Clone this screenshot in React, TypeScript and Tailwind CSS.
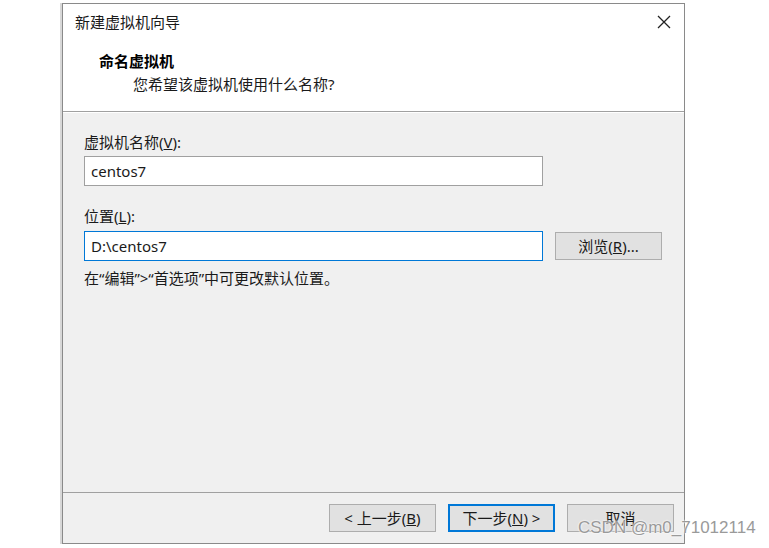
import React from "react";

const font = { fontFamily: '"Noto Sans", "Noto Sans CJK SC", sans-serif' };

function Btn({ children, primary }: { children: React.ReactNode; primary?: boolean }) {
  return (
    <div
      className={
        "w-[107px] h-[28px] flex items-center justify-center bg-[#e1e1e1] text-[15px] text-[#1a1a1a] " +
        (primary ? "border-2 border-[#0078d7]" : "border border-[#adadad]")
      }
    >
      {children}
    </div>
  );
}

export default function App() {
  return (
    <div className="w-[769px] h-[548px] bg-white relative overflow-hidden" style={font}>
      <div className="pl-[62px] pt-[3px]">
        <div className="w-[623px] h-[541px] border border-[#8a8a8a] flex flex-col bg-[#f0f0f0] shadow-[-2px_0_0_#d8d8d8]">
          {/* header */}
          <div className="h-[108px] bg-white border-b border-[#a0a0a0] flex flex-col relative">
            <div className="flex items-center justify-between pl-[12px] pr-[12px] pt-[8px] h-[28px]">
              <span className="text-[15px] leading-[20px] text-[#1a1a1a]">新建虚拟机向导</span>
              <svg width="14" height="14" viewBox="0 0 14 14" className="mr-[1px]">
                <path d="M1 1 L13 13 M13 1 L1 13" stroke="#222" strokeWidth="1.3" />
              </svg>
            </div>
            <div className="pl-[36px] mt-[19px] text-[15px] leading-[20px] font-bold text-black">命名虚拟机</div>
            <div className="pl-[70px] mt-[3px] text-[15px] leading-[20px] text-[#1a1a1a]">您希望该虚拟机使用什么名称?</div>
          </div>
          {/* body */}
          <div className="flex-1 pl-[21px] pt-[19px] border-t border-white">
            <div className="text-[15px] leading-[20px] text-[#1a1a1a]">
              虚拟机名称(<span className="underline">V</span>):
            </div>
            <div className="mt-[4px] w-[459px] h-[30px] border border-[#a0a0a0] bg-white flex items-center pl-[6px] text-[15px] text-[#1a1a1a]">
              centos7
            </div>
            <div className="mt-[20px] text-[15px] leading-[20px] text-[#1a1a1a]">
              位置(<span className="underline">L</span>):
            </div>
            <div className="mt-[5px] flex items-center gap-[12px]">
              <div className="w-[459px] h-[30px] border border-[#0078d7] bg-white flex items-center pl-[6px] text-[15px] text-[#1a1a1a]">
                D:\centos7
              </div>
              <Btn>
                浏览(<span className="underline">R</span>)...
              </Btn>
            </div>
            <div className="mt-[7px] text-[15px] leading-[20px] text-[#1a1a1a]">
              在“编辑”&gt;“首选项”中可更改默认位置。
            </div>
          </div>
          {/* footer */}
          <div className="h-[51px] border-t border-[#a0a0a0] flex items-start justify-end gap-[12px] pr-[10px] pt-[11px]">
            <Btn>
              &lt; 上一步(<span className="underline">B</span>)
            </Btn>
            <Btn primary>
              下一步(<span className="underline">N</span>) &gt;
            </Btn>
            <Btn>取消</Btn>
          </div>
        </div>
      </div>
      <div
        className="absolute left-[578px] top-[517px] text-[17px] leading-[22px] text-[#9a9a9a] whitespace-nowrap"
        style={{ fontFamily: '"Liberation Sans", Arial, sans-serif', textShadow: "0 0 2px #fff, 0 0 2px #fff" }}
      >
        CSDN @m0_71012114
      </div>
    </div>
  );
}
